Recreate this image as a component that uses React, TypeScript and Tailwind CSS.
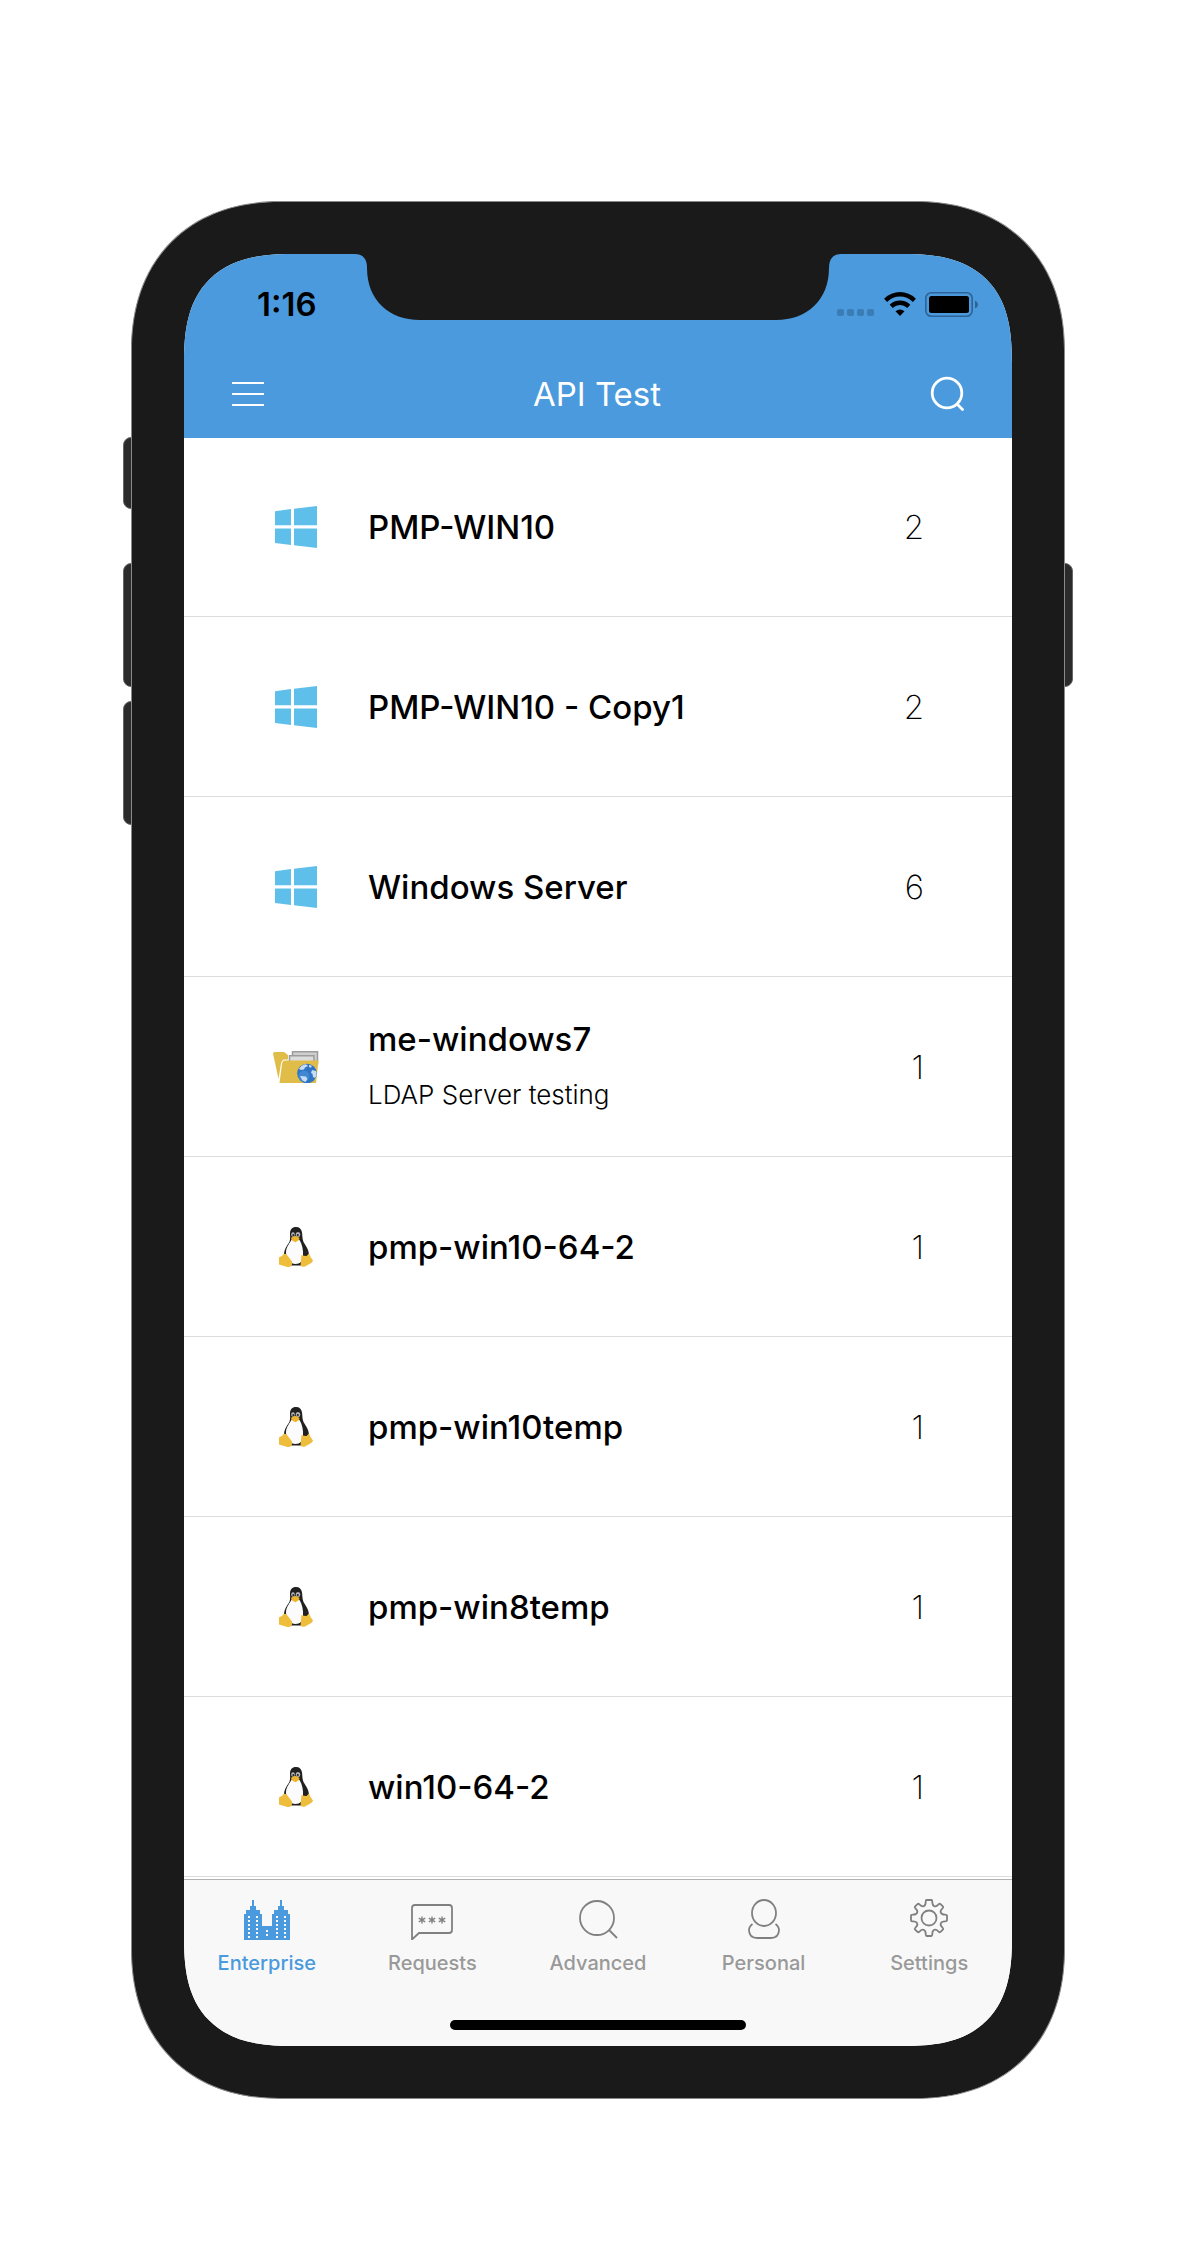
import React, { useState } from "react";

type Platform = "windows" | "ldap" | "linux";

interface Resource {
    name: string;
    description?: string;
    platform: Platform;
    count: number;
}

const resources: Resource[] = [
    { name: "PMP-WIN10", platform: "windows", count: 2 },
    { name: "PMP-WIN10 - Copy1", platform: "windows", count: 2 },
    { name: "Windows Server", platform: "windows", count: 6 },
    { name: "me-windows7", description: "LDAP Server testing", platform: "ldap", count: 1 },
    { name: "pmp-win10-64-2", platform: "linux", count: 1 },
    { name: "pmp-win10temp", platform: "linux", count: 1 },
    { name: "pmp-win8temp", platform: "linux", count: 1 },
    { name: "win10-64-2", platform: "linux", count: 1 },
];

function WindowsIcon() {
    return (
        <svg width="42" height="42" viewBox="0 0 42 42" fill="#5fbfeb" aria-hidden="true">
            <path d="M0 5.2 16 3v16.3H0zM19 2.7 42 0v19.3H19zM0 22.5h16V39L0 37zM19 22.5h23V42l-23-2.7z" />
        </svg>
    );
}

function FolderIcon() {
    return (
        <svg width="46" height="32" viewBox="0 0 46 32" aria-hidden="true">
            <path d="M0 2.500Q0 1 2 1h8.500q1.500 0 2.500 1.500l2 1.500v4.500h-3q-3 0-4 4L5.500 28z" fill="#e0bd48" />
            <path d="M19.500.8h25v12h-25z" fill="#cfcfcf" stroke="#9c9c9c" strokeWidth="1.500" />
            <path d="M16.500 4.800H41v6H16.500z" fill="#dcdcdc" stroke="#9c9c9c" strokeWidth="1.500" />
            <path d="M12 9.500h33.500L43 32H6.500L9 13q.5-3.500 3-3.500z" fill="#e0bd48" />
            <circle cx="34" cy="22.500" r="9.800" fill="#2f74c4" />
            <circle cx="31" cy="25" r="5.500" fill="#4f96dc" opacity=".6" />
            <path d="M26 18q2-4 7-4.700l2 1.700-3 1.500-1 2-3 .5zM36 14l3 .8-1 2-2-.8zM39 19l4 1q1.500 4-1 7l-2-1-.5-3-1.500-1zM27 25l6 .5 1.500 2.500-2 3-3-1.500z" fill="#c6dcf2" />
        </svg>
    );
}

function LinuxIcon() {
    return (
        <svg width="34" height="40" viewBox="0 0 34 40" aria-hidden="true">
            <path d="M17 0c-4 0-6 2.500-6 6.500 0 3 .5 5-.5 8C9 18 6 20 5 26.500L8 38.500h18l4-10c0-6-3.500-10-5.500-13.500C23 11 23.500 8 23 5.500 22.500 2 20.500 0 17 0z" fill="#202020" />
            <path d="M12.500 12.500c-1 3-5.500 7-5.500 13 0 5 4 11.500 9.500 11.500 5 0 7-3 7.500-8 .5-6-1-12-3.500-16z" fill="#fbfbfc" />
            <ellipse cx="14" cy="7.500" rx="1.800" ry="2.300" fill="#b9b9bd" />
            <ellipse cx="19" cy="7.500" rx="2.300" ry="2.500" fill="#b9b9bd" />
            <circle cx="14.300" cy="8" r="1" fill="#222" />
            <circle cx="18.800" cy="8" r="1.100" fill="#222" />
            <path d="M12 10.800 16 8.800l4.500 2-.5 2.200-3.500 2.300-3.500-1.800z" fill="#eeb42c" />
            <path d="M0 30.500q.5-1 3-1.500l1.500-2q2-1 3.500 1l5 6.500q1 3.500-1.500 5-2 1-4 .2L0 37.500q-.5-3 0-7z" fill="#efbd3c" />
            <path d="M22.500 28q2.500 1 5 1l2.500-2.500q1 3.500 4 7-.5 2-3.500 3.500L26 39.500q-3 1-4.500-1z" fill="#efbd3c" />
        </svg>
    );
}

const platformIcons: Record<Platform, () => React.JSX.Element> = {
    windows: WindowsIcon,
    ldap: FolderIcon,
    linux: LinuxIcon,
};

function EnterpriseIcon() {
    // lit windows sit on a 4px grid
    const floors = [16, 20, 24, 28, 32, 36];
    return (
        <svg width="46" height="40" viewBox="0 0 46 40" shapeRendering="crispEdges" aria-hidden="true">
            <path
                d="M0 40V14h2v-4h4V6h2V0h2v6h2v4h4v4h2v12h10V14h2v-4h4V6h2V0h2v6h2v4h4v4h2v26z"
                fill="currentColor"
            />
            {[4, 12, 32, 40].map(x => floors.map(y => (
                <rect key={`${x}-${y}`} x={x} y={y} width="2" height="2" fill="#f8f8f8" />
            )))}
            <rect x="22" y="30" width="2" height="2" fill="#f8f8f8" />
            <rect x="22" y="34" width="2" height="2" fill="#f8f8f8" />
        </svg>
    );
}

function RequestsIcon() {
    return (
        <svg width="42" height="40" viewBox="0 0 42 40" fill="none" stroke="#808080" strokeWidth="1.800" aria-hidden="true">
            <path d="M4 5h34q3 0 3 3v22q0 3-3 3H8l-7 6.500V8q0-3 3-3z" />
            <g strokeWidth="1.400">
                {[11, 21, 31].map(x => (
                    <path key={x} d={`M${x} 16.500v7M${x - 3.2} 18.200l6.400 3.600M${x + 3.2} 18.200l-6.400 3.600`} />
                ))}
            </g>
        </svg>
    );
}

function AdvancedIcon() {
    return (
        <svg width="40" height="40" viewBox="0 0 40 40" fill="none" stroke="#808080" strokeWidth="1.800" aria-hidden="true">
            <circle cx="19" cy="18" r="17" />
            <path d="m31 30 8 8" />
        </svg>
    );
}

function PersonalIcon() {
    return (
        <svg width="32" height="40" viewBox="0 0 32 40" className="overflow-visible" fill="none" stroke="#808080" strokeWidth="1.800" aria-hidden="true">
            <ellipse cx="16" cy="13" rx="12" ry="13" />
            <path d="M4.500 24Q1 26.500 1 30.500 1.500 38 9 38h14q7.500 0 8-7.500 0-4-3.500-6.500" />
        </svg>
    );
}

function SettingsIcon() {
    return (
        <svg width="40" height="40" viewBox="0 1 40 40" className="overflow-visible" fill="none" stroke="#808080" strokeWidth="1.800" strokeLinejoin="round" aria-hidden="true">
            <path
                d="M17.500 1h5q.8 0 .8 2 0 3.500 2 4.200 1.800.8 4-1.500 1.300-1.300 2-.8l2.800 2.800q.6.700-.8 2-2.300 2.200-1.500 4 .8 2 4.200 2 2 0 2 .8v5q0 .8-2 .8-3.400 0-4.200 2-.8 1.800 1.500 4 1.400 1.300.8 2l-2.800 2.800q-.7.500-2-.8-2.200-2.300-4-1.500-2 .7-2 4.200 0 2-.8 2h-5q-.8 0-.8-2 0-3.500-2-4.200-1.800-.8-4 1.500-1.300 1.300-2 .8l-2.800-2.800q-.6-.7.800-2 2.300-2.200 1.500-4-.8-2-4.200-2-2 0-2-.8v-5q0-.8 2-.8 3.400 0 4.200-2 .8-1.800-1.500-4-1.400-1.300-.8-2l2.800-2.800q.7-.5 2 .8 2.200 2.300 4 1.500 2-.7 2-4.200 0-2 .8-2z"
            />
            <circle cx="20" cy="19" r="7.500" />
        </svg>
    );
}

const tabs = [
    { label: "Enterprise", Icon: EnterpriseIcon },
    { label: "Requests", Icon: RequestsIcon },
    { label: "Advanced", Icon: AdvancedIcon },
    { label: "Personal", Icon: PersonalIcon },
    { label: "Settings", Icon: SettingsIcon },
];

function StatusBar() {
    return (
        <div className="flex h-[100px] items-center justify-between pl-[73px] pr-[33px]">
            <span className="text-[33px] leading-10 font-semibold text-black">1:16</span>
            <div className="flex items-end gap-[9px]">
                <svg width="38" height="25" viewBox="0 0 38 25" fill="#3a7cb4" aria-hidden="true">
                    {[0, 10, 20, 30].map(x => <rect key={x} x={x} y="17" width="7" height="7" rx="2" />)}
                </svg>
                <svg width="32" height="25" viewBox="0 0 32 25" aria-hidden="true">
                    <g fill="none" stroke="#000" strokeWidth="4.400">
                        <path d="M1.600 8.300Q8 2.300 16 2.300t14.400 6" />
                        <path d="M7.200 14.300Q11 10.800 16 10.800t8.800 3.500" />
                    </g>
                    <path d="M11.500 19.300Q16 15.500 20.500 19.300L16 24z" />
                </svg>
                <svg width="54" height="25" viewBox="0 0 54 25" aria-hidden="true">
                    <rect x=".8" y=".8" width="46.400" height="23.400" rx="5.500" fill="none" stroke="#2d6396" strokeWidth="1.600" />
                    <rect x="4" y="4" width="40" height="17" rx="2.500" />
                    <path d="M50 8.500q3 1.500 3 4t-3 4z" fill="#2d6396" />
                </svg>
            </div>
        </div>
    );
}

function Header() {
    return (
        <header className="relative z-10 -mb-px h-[184px] bg-[#4a9add]">
            <StatusBar />
            <div className="flex items-center justify-between px-12 pt-5">
                <button type="button" aria-label="Menu" className="flex w-8 flex-col gap-[9px]">
                    <span className="h-0.5 bg-white" />
                    <span className="h-0.5 bg-white" />
                    <span className="h-0.5 bg-white" />
                </button>
                <h1 className="text-[33px] leading-10 text-white">API Test</h1>
                <button type="button" aria-label="Search">
                    <svg width="34" height="36" viewBox="0 0 34 36" fill="none" stroke="#fff" strokeWidth="2.800" strokeLinecap="round" aria-hidden="true">
                        <circle cx="17" cy="17" r="14.800" />
                        <path d="m27.500 28.500 5 5" />
                    </svg>
                </button>
            </div>
        </header>
    );
}

function ResourceRow({ resource }: { resource: Resource }) {
    const Icon = platformIcons[resource.platform];

    return (
        <li className="flex h-[180px] items-center border-b border-[#dcdcdc] px-[88px] pt-px">
            <span className="flex w-12 shrink-0 justify-center">
                <Icon />
            </span>
            <div className="ml-12 flex-1">
                <h2 className="text-[33px] leading-10 font-medium text-black">{resource.name}</h2>
                {resource.description && (
                    <p className="mt-4 text-[26px] leading-10 font-light text-black">{resource.description}</p>
                )}
            </div>
            <span className="text-[33px] leading-10 font-extralight text-black">{resource.count}</span>
        </li>
    );
}

export default function App() {
    const [active, setActive] = useState("Enterprise");

    return (
        <main className="min-h-screen bg-white px-[131px] pt-[201px] pb-[150px] font-['Inter','Liberation_Sans',sans-serif]">
            <div className="relative mx-auto max-w-[934px]">
                {/* side buttons */}
                <span className="absolute -left-2 top-[236px] h-[72px] w-5 rounded-lg border border-[#666] bg-[#2b2b2b]" />
                <span className="absolute -left-2 top-[362px] h-[124px] w-5 rounded-lg border border-[#666] bg-[#2b2b2b]" />
                <span className="absolute -left-2 top-[500px] h-[124px] w-5 rounded-lg border border-[#666] bg-[#2b2b2b]" />
                <span className="absolute -right-2 top-[362px] h-[124px] w-5 rounded-lg border border-[#666] bg-[#2b2b2b]" />

                <div className="relative rounded-[150px] border border-[#8a8a8a] bg-[#1a1a1a] p-[52px] [corner-shape:superellipse(1.15)]">
                    <div className="relative overflow-hidden rounded-[110px] bg-white [corner-shape:superellipse(1.4)]">
                        <svg className="absolute top-0 left-1/2 z-20 -translate-x-1/2" width="486" height="66" viewBox="0 0 486 66" fill="#1a1a1a" aria-hidden="true">
                            <path d="M0 0C8 0 12 5 12 14C12 46 34 66 65 66H421C452 66 474 46 474 14C474 5 478 0 486 0Z" />
                        </svg>
                        <Header />
                        <ul className="pb-0.5">
                            {resources.map(r => <ResourceRow key={r.name} resource={r} />)}
                        </ul>
                        <nav className="border-t border-[#b2b2b2] bg-[#f8f8f8] pt-5 pb-4">
                            <div className="flex">
                                {tabs.map(({ label, Icon }) => (
                                    <button
                                        key={label}
                                        type="button"
                                        onClick={() => setActive(label)}
                                        className={`flex flex-1 basis-0 flex-col items-center gap-[11px] text-xl leading-6 font-medium ${active === label ? "text-[#4a9add]" : "text-[#999]"}`}
                                    >
                                        <Icon />
                                        {label}
                                    </button>
                                ))}
                            </div>
                            <div className="mx-auto mt-[45px] h-2.5 w-[296px] rounded-full bg-black" />
                        </nav>
                    </div>
                </div>
            </div>
        </main>
    );
}
